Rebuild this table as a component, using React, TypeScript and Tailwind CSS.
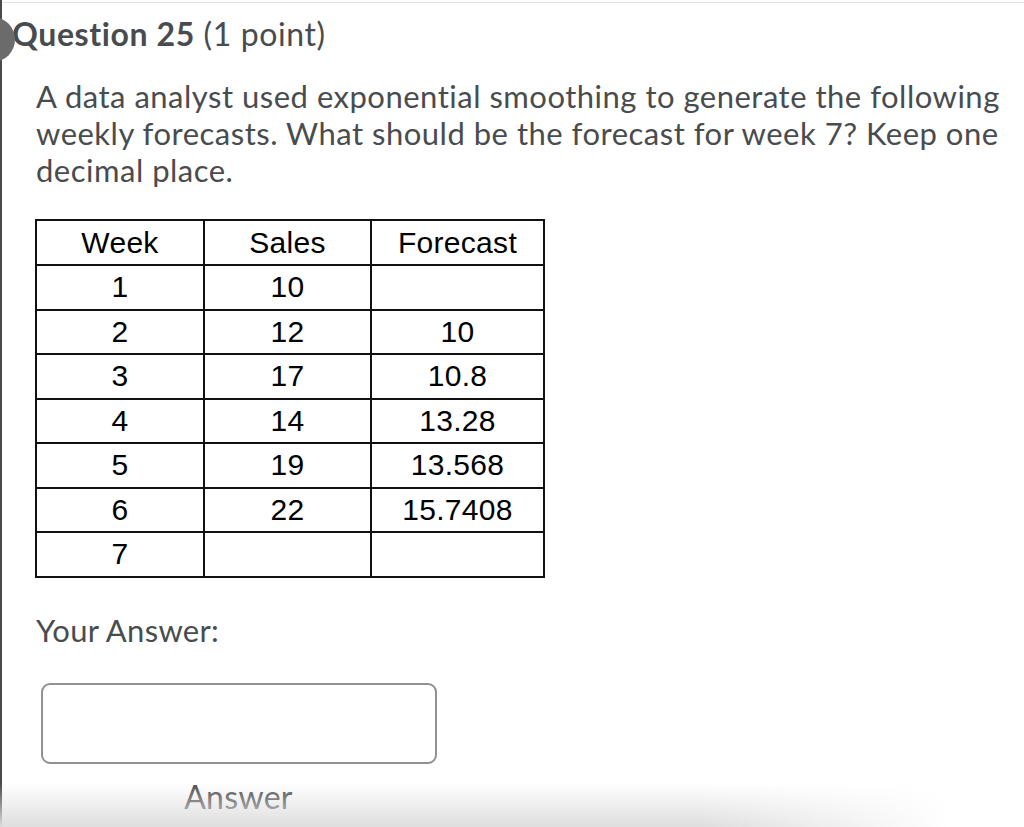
import React from 'react';

const rows: [string, string, string][] = [
  ['1', '10', ''],
  ['2', '12', '10'],
  ['3', '17', '10.8'],
  ['4', '14', '13.28'],
  ['5', '19', '13.568'],
  ['6', '22', '15.7408'],
  ['7', '', ''],
];

const App: React.FC = () => {
  return (
    <div className="relative w-[1024px] h-[827px] overflow-hidden bg-white font-['Lato',sans-serif] text-[#494c4e]">
      {/* top rule + left rail */}
      <div className="absolute top-[2px] left-0 right-0 h-px bg-[#e3e3e3]"></div>
      <div className="absolute top-0 bottom-0 left-0 w-[2px] bg-[#4a4a4a]"></div>
      <div className="absolute left-[-30px] top-[17px] w-[45px] h-[45px] rounded-full bg-[#6b6b6b]"></div>

      <div className="pl-[36px] pt-[14px]">
        <h2 className="-ml-[24px] text-[32px] leading-[40px] tracking-[0.6px]">
          <span className="font-bold">Question 25</span> <span>(1 point)</span>
        </h2>

        <p className="mt-[24px] text-[31px] leading-[37px] tracking-[0.5px] w-[985px]">
          A data analyst used exponential smoothing to generate the following weekly forecasts. What should be the forecast for week 7? Keep one decimal place.
        </p>

        {/* data table */}
        <table className="mt-[30px] -ml-px border-collapse font-['Liberation_Sans',Arial,sans-serif] text-[30px] leading-[34px] text-black tracking-[0.3px]">
          <thead>
            <tr className="h-[45px]">
              <th className="w-[168px] p-0 border-2 border-[#111] font-normal">Week</th>
              <th className="w-[167px] p-0 border-2 border-[#111] font-normal">Sales</th>
              <th className="w-[173px] p-0 border-2 border-[#111] font-normal">Forecast</th>
            </tr>
          </thead>
          <tbody>
            {rows.map((r) => (
              <tr key={r[0]} className="h-[44.5px] text-center">
                <td className="p-0 border-2 border-[#111]">{r[0]}</td>
                <td className="p-0 border-2 border-[#111]">{r[1]}</td>
                <td className="p-0 border-2 border-[#111]">{r[2]}</td>
              </tr>
            ))}
          </tbody>
        </table>

        <div className="mt-[34px] text-[31px] leading-[36px] tracking-[0.3px]">Your Answer:</div>

        <div className="mt-[35px] ml-[5px] w-[396px] h-[81px] rounded-[9px] border-2 border-[#8f9193]"></div>

        <div className="mt-[14px] w-[405px] text-center text-[32px] leading-[38px] tracking-[0.3px]">Answer</div>
      </div>

      {/* bottom fade */}
      <div className="pointer-events-none absolute left-0 bottom-0 w-[1000px] h-[44px] bg-gradient-to-b from-white/0 to-[#dedede] [mask-image:linear-gradient(to_right,black_70%,transparent_95%)]"></div>
    </div>
  );
};

export default App;
